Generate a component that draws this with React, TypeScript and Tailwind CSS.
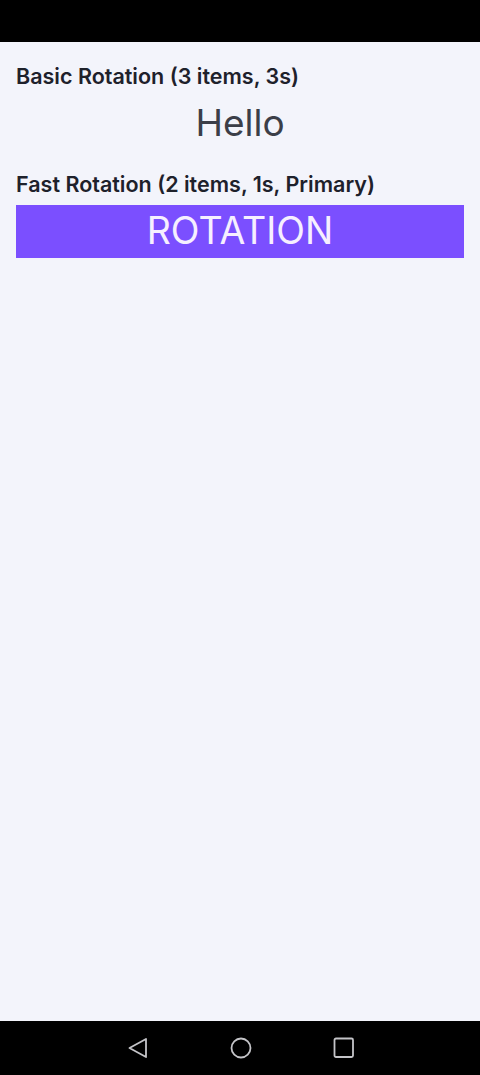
function NavBar() {
  return (
    <div className="flex h-[54px] items-center justify-center gap-[79px] bg-black pl-[2px]">
      <svg width="24" height="24" viewBox="0 0 24 24" fill="none" stroke="#c4c4c8" strokeWidth="1.8" strokeLinejoin="round">
        <path d="M20 3 L3.5 12 L20 21 Z" />
      </svg>
      <svg width="24" height="24" viewBox="0 0 24 24" fill="none" stroke="#c4c4c8" strokeWidth="1.8">
        <circle cx="12" cy="12" r="9.5" />
      </svg>
      <svg width="24" height="24" viewBox="0 0 24 24" fill="none" stroke="#c4c4c8" strokeWidth="1.8">
        <rect x="2.5" y="2.5" width="18.5" height="18.5" rx="1.5" />
      </svg>
    </div>
  );
}

export default function App() {
  return (
    <div
      className="flex h-[1075px] w-[480px] flex-col bg-[#f3f4fb]"
      style={{ fontFamily: "Inter, 'Noto Sans', sans-serif" }}
    >
      <div className="h-[42px] bg-black" />
      <main className="flex-1 px-4 pt-[20px]">
        <h2 className="text-[21.5px] font-semibold leading-[28px] text-[#1e212b]">
          Basic Rotation (3 items, 3s)
        </h2>
        <div className="mt-[11px] text-center text-[37px] leading-[44px] text-[#3b3e48]">
          Hello
        </div>
        <h2 className="mt-[25px] text-[21.5px] font-semibold leading-[28px] text-[#1e212b]">
          Fast Rotation (2 items, 1s, Primary)
        </h2>
        <div className="mt-[7px] flex h-[53px] items-center justify-center bg-[#7b4fff] text-[37.5px] text-[#f6efff]">
          ROTATION
        </div>
      </main>
      <NavBar />
    </div>
  );
}
